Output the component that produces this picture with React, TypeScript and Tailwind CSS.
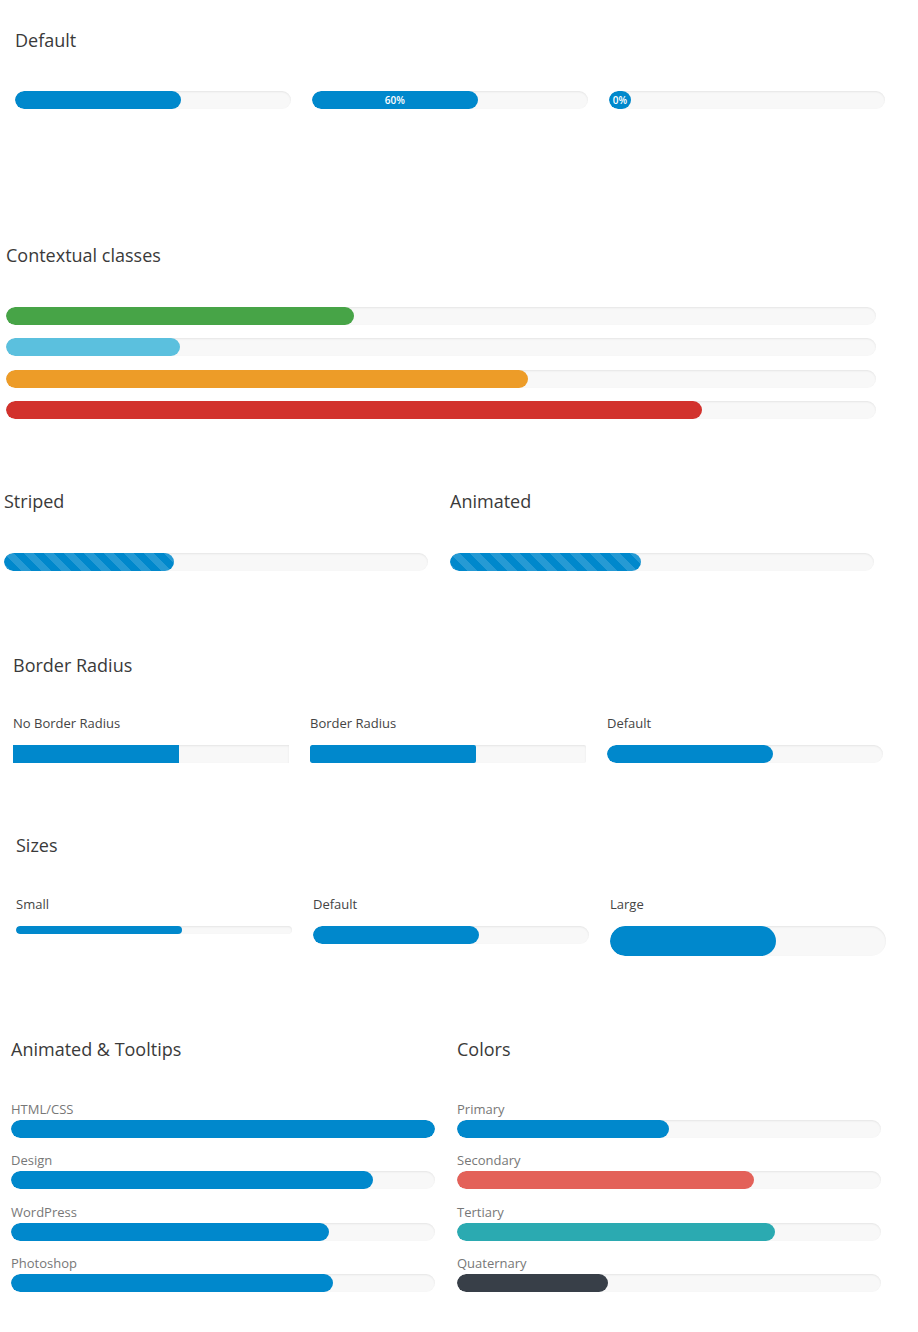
import React from "react";

type BarProps = {
  value: number;
  color?: string;
  height?: string;
  radius?: string;
  striped?: boolean;
  label?: string;
  minWidth?: string;
};

const stripes =
  "bg-[linear-gradient(45deg,rgba(255,255,255,0.15)_25%,transparent_25%,transparent_50%,rgba(255,255,255,0.15)_50%,rgba(255,255,255,0.15)_75%,transparent_75%,transparent)] bg-[length:20px_20px]";

function Bar({
  value,
  color = "bg-[#0088cc]",
  height = "h-[18px]",
  radius = "rounded-full",
  striped = false,
  label,
  minWidth = "",
}: BarProps) {
  return (
    <div
      className={`${height} ${radius} w-full overflow-hidden bg-[#f8f8f8] shadow-[inset_0_1px_2px_rgba(0,0,0,0.08)]`}
    >
      <div
        className={`${color} ${radius} ${minWidth} h-full flex items-center justify-center ${striped ? stripes : ""}`}
        style={{ width: `${value}%` }}
      >
        {label && (
          <span className="text-[10px] font-semibold leading-none text-white">
            {label}
          </span>
        )}
      </div>
    </div>
  );
}

function Heading({ children }: { children: React.ReactNode }) {
  return (
    <h4 className="text-[18px] leading-[27px] text-[#3a3a3a] font-normal">
      {children}
    </h4>
  );
}

function Label({ children, muted = false }: { children: React.ReactNode; muted?: boolean }) {
  return (
    <p className={`text-[13px] leading-[18px] ${muted ? "text-[#777]" : "text-[#444]"}`}>
      {children}
    </p>
  );
}

const skills = [
  { name: "HTML/CSS", value: 100 },
  { name: "Design", value: 85.3 },
  { name: "WordPress", value: 75 },
  { name: "Photoshop", value: 76 },
];

const colors = [
  { name: "Primary", value: 50, color: "bg-[#0088cc]" },
  { name: "Secondary", value: 70, color: "bg-[#e36159]" },
  { name: "Tertiary", value: 75, color: "bg-[#2baab1]" },
  { name: "Quaternary", value: 35.6, color: "bg-[#383f48]" },
];

export default function App() {
  return (
    <div
      className="min-h-[1332px] w-[918px] bg-white pb-10"
      style={{ fontFamily: '"Open Sans", "Noto Sans", sans-serif' }}
    >
      {/* Default */}
      <section className="ml-[15px] w-[870px] pt-[27px]">
        <Heading>Default</Heading>
        <div className="mt-[37px] grid grid-cols-3 gap-x-[21px]">
          <Bar value={60} />
          <Bar value={60} label="60%" />
          <Bar value={0} label="0%" minWidth="min-w-[22px]" />
        </div>
      </section>

      {/* Contextual classes */}
      <section className="ml-[6px] w-[870px] mt-[133px]">
        <Heading>Contextual classes</Heading>
        <div className="mt-[38px] flex flex-col gap-[13.4px]">
          <Bar value={40} color="bg-[#47a447]" />
          <Bar value={20} color="bg-[#5bc0de]" />
          <Bar value={60} color="bg-[#ed9c28]" />
          <Bar value={80} color="bg-[#d2322d]" />
        </div>
      </section>

      {/* Striped / Animated */}
      <section className="ml-[4px] w-[870px] mt-[68.8px] grid grid-cols-2 gap-x-[22px]">
        <div>
          <Heading>Striped</Heading>
          <div className="mt-[38px]">
            <Bar value={40} striped />
          </div>
        </div>
        <div>
          <Heading>Animated</Heading>
          <div className="mt-[38px]">
            <Bar value={45} striped />
          </div>
        </div>
      </section>

      {/* Border Radius */}
      <section className="ml-[13px] w-[870px] mt-[81px]">
        <Heading>Border Radius</Heading>
        <div className="mt-[35px] grid grid-cols-3 gap-x-[21px]">
          <div>
            <Label>No Border Radius</Label>
            <div className="mt-[13px]">
              <Bar value={60} radius="rounded-none" />
            </div>
          </div>
          <div>
            <Label>Border Radius</Label>
            <div className="mt-[13px]">
              <Bar value={60} radius="rounded-[2px]" />
            </div>
          </div>
          <div>
            <Label>Default</Label>
            <div className="mt-[13px]">
              <Bar value={60} />
            </div>
          </div>
        </div>
      </section>

      {/* Sizes */}
      <section className="ml-[16px] w-[870px] mt-[69px]">
        <Heading>Sizes</Heading>
        <div className="mt-[36px] grid grid-cols-3 gap-x-[21px] items-start">
          <div>
            <Label>Small</Label>
            <div className="mt-[13px]">
              <Bar value={60} height="h-[8px]" />
            </div>
          </div>
          <div>
            <Label>Default</Label>
            <div className="mt-[13px]">
              <Bar value={60} />
            </div>
          </div>
          <div>
            <Label>Large</Label>
            <div className="mt-[13px]">
              <Bar value={60} height="h-[30px]" />
            </div>
          </div>
        </div>
      </section>

      {/* Animated & Tooltips / Colors */}
      <section className="ml-[11px] w-[870px] mt-[80px] grid grid-cols-2 gap-x-[22px]">
        <div>
          <Heading>Animated &amp; Tooltips</Heading>
          <div className="mt-[37px] flex flex-col gap-[13.4px]">
            {skills.map((s) => (
              <div key={s.name}>
                <Label muted>{s.name}</Label>
                <div className="mt-[2px]">
                  <Bar value={s.value} />
                </div>
              </div>
            ))}
          </div>
        </div>
        <div>
          <Heading>Colors</Heading>
          <div className="mt-[37px] flex flex-col gap-[13.4px]">
            {colors.map((c) => (
              <div key={c.name}>
                <Label muted>{c.name}</Label>
                <div className="mt-[2px]">
                  <Bar value={c.value} color={c.color} />
                </div>
              </div>
            ))}
          </div>
        </div>
      </section>
    </div>
  );
}
